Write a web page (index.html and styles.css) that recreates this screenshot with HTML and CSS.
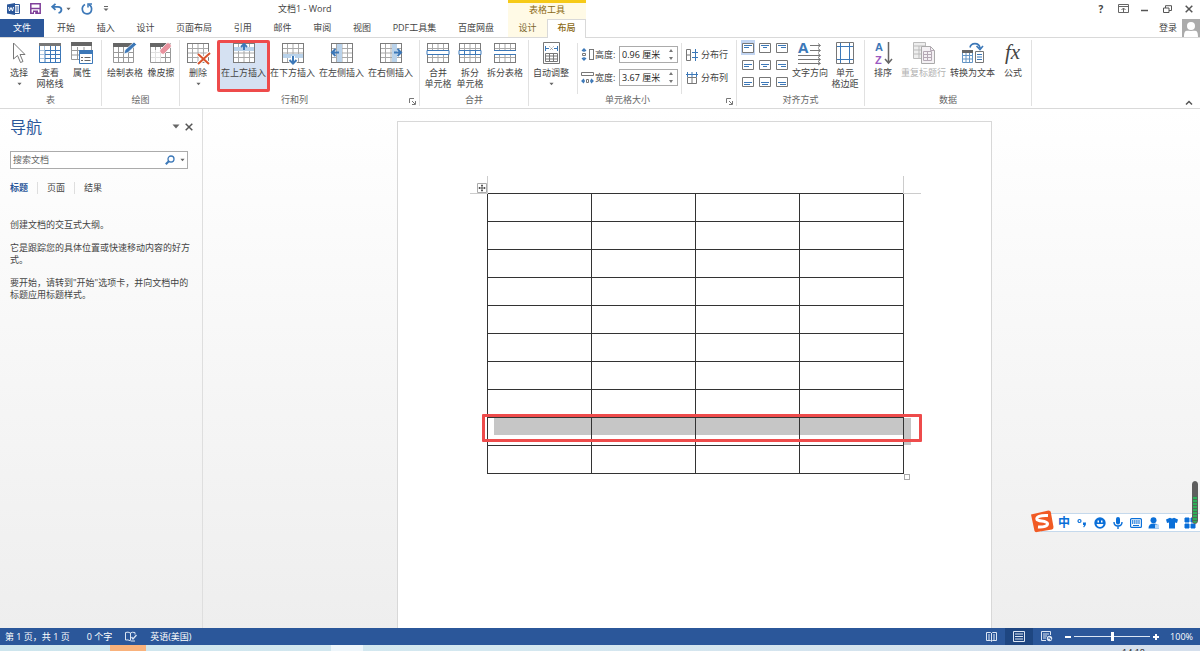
FILE: index.html
```html
<!DOCTYPE html>
<html lang="zh-CN">
<head>
<meta charset="utf-8">
<title>文档1 - Word</title>
<link rel="stylesheet" href="styles.css">
</head>
<body>
<svg class="defs" aria-hidden="true">
  <symbol id="grid" viewBox="0 0 22 20">
    <rect x=".5" y=".5" width="21" height="19" fill="#fff" stroke="#7c7c7c"/>
    <path d="M5.500 1v18M11 1v18M16.500 1v18M1 5.500h20M1 10h20M1 14.500h20" stroke="#a9a9a9" fill="none"/>
  </symbol>
  <symbol id="caret" viewBox="0 0 6 4"><path d="M.5 .5h5L3 3.500z" fill="#666"/></symbol>
  <symbol id="launch" viewBox="0 0 7 7"><path d="M.5 5V.5H5M3 3l3 3M6.500 3v3.500H3" stroke="#777" fill="none"/></symbol>
</svg>

<header class="top">
  <div class="titlebar">
    <div class="quick">
      <svg width="13" height="12" viewBox="0 0 13 12"><path d="M8 1.500h4.500v9H8M8.500 4h3M8.500 6h3M8.500 8h3" stroke="#2b579a" fill="none"/><path d="M0 1.500 8 0v12L0 10.500z" fill="#2b579a"/><path d="M1.500 4l1 4L4 4.500 5.500 8l1-4" stroke="#fff" fill="none"/></svg>
      <button type="button" aria-label="保存"><svg width="11" height="11" viewBox="0 0 11 11"><path d="M.8 .8h9.400v9.400H.8z" fill="#fff" stroke="#80409a" stroke-width="1.500"/><path d="M1 5.500h9" stroke="#80409a" stroke-width="1.500"/><path d="M3 7.500h5V11H3z" fill="#80409a"/><path d="M4 9h1.200v2H4z" fill="#fff"/></svg></button>
      <button type="button" class="undo" aria-label="撤消"><svg width="12" height="11" viewBox="0 0 12 11"><path d="M4.500 .8 1.200 3.800l3.300 3M1.500 3.800H7c4.500 0 4.500 5.200 .5 6.200" stroke="#3c78b8" stroke-width="1.800" fill="none"/></svg><svg width="5" height="4"><use href="#caret"/></svg></button>
      <button type="button" aria-label="恢复"><svg width="12" height="12" viewBox="0 0 12 12"><path d="M4 1.600C-.5 4 1 10.800 6 10.800c5.300 0 6-7 2-9" stroke="#3c78b8" stroke-width="1.700" fill="none"/><path d="M7 4.500V1h4" stroke="#3c78b8" stroke-width="1.500" fill="none"/></svg></button>
      <button type="button" aria-label="自定义"><svg width="6" height="6" viewBox="0 0 6 6"><path d="M1 .5h4" stroke="#666"/><path d="M.5 2.500h5L3 5z" fill="#666"/></svg></button>
    </div>
    <h1 class="doc-title">文档1 - Word</h1>
  </div>
  <div class="context-title">表格工具</div>
  <div class="window-buttons">
    <button type="button" class="help">?</button>
    <button type="button" aria-label="功能区显示选项"><svg width="11" height="9" viewBox="0 0 11 9"><path d="M.5 .5h10v8H.5zM1 2.500h9M5.500 8V4M3.500 6l2-2 2 2" stroke="#666" fill="none"/></svg></button>
    <button type="button" aria-label="最小化"><svg width="8" height="8"><path d="M0 5.500h7" stroke="#555" stroke-width="1.500"/></svg></button>
    <button type="button" aria-label="还原"><svg width="9" height="8" viewBox="0 0 9 8"><path d="M.5 3h5.500v4.500H.5zM2.500 3V.7h6V5.500H6" stroke="#555" fill="none"/></svg></button>
    <button type="button" aria-label="关闭"><svg width="8" height="8"><path d="M.7 .7l6.600 6.600M7.300 .7.7 7.300" stroke="#555" stroke-width="1.500"/></svg></button>
  </div>
  <nav class="tabs">
    <button type="button" class="file-tab">文件</button>
    <div class="tab-list">
      <a href="#">开始</a><a href="#">插入</a><a href="#">设计</a><a href="#">页面布局</a><a href="#">引用</a><a href="#">邮件</a><a href="#">审阅</a><a href="#">视图</a><a href="#">PDF工具集</a><a href="#">百度网盘</a>
    </div>
  </nav>
  <nav class="context-tabs"><a href="#">设计</a><a href="#" class="active">布局</a></nav>
  <div class="account">
    <a href="#">登录</a>
    <svg width="18" height="18" viewBox="0 0 18 18"><path d="M0 0h18v18H0z" fill="#ababab"/><circle cx="9" cy="7" r="4" fill="#fff"/><path d="M2 18c0-8 3-6 7-6s7-2 7 6z" fill="#fff"/></svg>
  </div>
</header>

<section class="ribbon" aria-label="布局">
  <div class="group">
    <div class="tools lead">
      <button type="button" class="tool w30"><svg width="22" height="22" viewBox="0 0 22 22"><path d="M5.500 1v16l4-3.500 3 7 2.500-1-3-7h5z" fill="#fff" stroke="#777"/></svg><span>选择</span><svg class="caret" width="5" height="4"><use href="#caret"/></svg></button>
      <button type="button" class="tool w32"><svg width="22" height="22" viewBox="0 0 22 22"><path d="M.5 1.500h21v19H.5z" fill="#fff" stroke="#3c78b8"/><path d="M0 1h22v3H0z" fill="#777"/><path d="M6 8v12M11.500 4v16M16.500 4v16M6 8.500h15M6 12.500h15M6 16.500h15" stroke="#3c78b8"/><path d="M5.500 4v4M1 8.500h4M1 12.500h4M1 16.500h4" stroke="#a9c4de"/></svg><span>查看<br>网格线</span></button>
      <button type="button" class="tool w32"><svg width="22" height="22" viewBox="0 0 22 22"><path d="M.5 1.500h20v16H.5zM1 8.500h8M1 13h7M6.500 5v12M13 5v4" fill="#fff" stroke="#999"/><path d="M0 0h21v4H0z" fill="#666"/><path d="M8.500 9.500h13v12h-13z" fill="#fff" stroke="#3c78b8"/><path d="M8 8h14v4H8z" fill="#3c78b8"/><path d="M10 15.500h2M10 18.500h2M13.500 15.500h6M13.500 18.500h6" stroke="#666"/></svg><span>属性</span></button>
    </div>
    <div class="group-name"><span>表</span></div>
  </div>
  <div class="group">
    <div class="tools inset">
      <button type="button" class="tool w42"><svg width="24" height="22" viewBox="0 0 24 22"><path d="M.5 1.500h20v19H.5zM1 10.500h19M1 15.500h19M5.500 5v15M10.500 5v15M15.500 5v15" fill="#fff" stroke="#999"/><path d="M0 1h19v4H0z" fill="#666"/><path d="M11 12l1-4L21 0l2.500 2.500L15 10.500z" fill="#3c78b8" stroke="#fff" stroke-width=".7"/></svg><span>绘制表格</span></button>
      <button type="button" class="tool w30"><svg width="22" height="22" viewBox="0 0 22 22"><path d="M.5 1.500h20v19H.5zM1 10.500h19M1 15.500h19M5.500 5v15M10.500 5v15M15.500 5v15" fill="#fff" stroke="#999"/><path d="M1 8h10v12H1z" fill="#fff" opacity=".7"/><path d="M0 1h17v4H0z" fill="#666"/><path d="M10 8l7-7c2-1 5 2 4 4l-7 7c-2 1-5-2-4-4z" fill="#e8929e" stroke="#fff" stroke-width=".7"/></svg><span>橡皮擦</span></button>
    </div>
    <div class="group-name"><span>绘图</span></div>
  </div>
  <div class="group">
    <div class="tools rows">
      <button type="button" class="tool w36"><svg width="24" height="22" viewBox="0 0 24 22"><use href="#grid" x="1" y="1" width="22" height="20"/><path d="M12 12l11 10M24 11 12 22" stroke="#fff" stroke-width="4"/><path d="M12 12l11 10M24 11 12 22" stroke="#d9532c" stroke-width="2"/></svg><span>删除</span><svg class="caret" width="5" height="4"><use href="#caret"/></svg></button>
      <button type="button" class="tool w49 chosen"><svg width="22" height="22" viewBox="0 0 22 22"><use href="#grid" y="1" width="22" height="20"/><path d="M1 5h20v4H1z" fill="#b9d2ea"/><path d="M11 8V2M8 5l3-3 3 3" stroke="#3c78b8" stroke-width="2" fill="none"/></svg><span>在上方插入</span></button>
      <button type="button" class="tool w49"><svg width="22" height="24" viewBox="0 0 22 24"><use href="#grid" y="2" width="22" height="20"/><path d="M1 13h20v4H1z" fill="#b9d2ea"/><path d="M11 15v7M7.500 19l3.500 3.500 3.500-3.500" stroke="#fff" stroke-width="4" fill="none"/><path d="M11 15v7M7.500 19l3.500 3.500 3.500-3.500" stroke="#3c78b8" stroke-width="2" fill="none"/></svg><span>在下方插入</span></button>
      <button type="button" class="tool w49"><svg width="22" height="22" viewBox="0 0 22 22"><use href="#grid" y="1" width="22" height="20"/><path d="M6 2h5v18H6z" fill="#b9d2ea"/><path d="M8 10.500H1.500M4.500 7l-3.500 3.500L4.500 14" stroke="#3c78b8" stroke-width="2" fill="none"/></svg><span>在左侧插入</span></button>
      <button type="button" class="tool w49"><svg width="22" height="22" viewBox="0 0 22 22"><use href="#grid" y="1" width="22" height="20"/><path d="M12 2h5v18h-5z" fill="#b9d2ea"/><path d="M14 10.500h6.500M17.500 7l3.500 3.500-3.500 3.500" stroke="#3c78b8" stroke-width="2" fill="none"/></svg><span>在右侧插入</span></button>
    </div>
    <div class="group-name"><span>行和列</span><button type="button" aria-label="行和列选项"><svg width="7" height="7"><use href="#launch"/></svg></button></div>
  </div>
  <div class="group">
    <div class="tools merge">
      <button type="button" class="tool w32"><svg width="22" height="22" viewBox="0 0 22 22"><use href="#grid" y="1" width="22" height="20"/><path d="M0 8.500h22v4H0z" fill="#fff" stroke="#3c78b8"/></svg><span>合并<br>单元格</span></button>
      <button type="button" class="tool w32"><svg width="22" height="22" viewBox="0 0 22 22"><use href="#grid" y="1" width="22" height="20"/><path d="M0 8.500h22v4H0zM5.500 9v3M11 9v3M16.500 9v3" fill="#fff" stroke="#3c78b8"/></svg><span>拆分<br>单元格</span></button>
      <button type="button" class="tool w38"><svg width="22" height="22" viewBox="0 0 22 22"><use href="#grid" y="1" width="22" height="20"/><path d="M0 8h22v5H0z" fill="#fff"/><path d="M0 8.500h22M0 12.500h22" stroke="#3c78b8"/></svg><span>拆分表格</span></button>
    </div>
    <div class="group-name"><span>合并</span></div>
  </div>
  <div class="group">
    <div class="tools">
      <button type="button" class="tool w44"><svg width="17" height="22" viewBox="0 0 17 22"><path d="M.5 .5h16v21H.5z" fill="#fff" stroke="#777"/><path d="M2.500 4v5M14.500 4v5M3 6.500h3M11 6.500h3" stroke="#3c78b8"/><path d="M6.500 4.500l4 4M10.500 4.500l-4 4" stroke="#888" stroke-dasharray="1 1"/><path d="M2.500 11.500h12v8h-12zM2.500 14h12M2.500 17h12M6.500 12v7M10.500 12v7" fill="none" stroke="#777"/></svg><span>自动调整</span><svg class="caret" width="5" height="4"><use href="#caret"/></svg></button>
      <div class="sizes">
        <div class="size-row"><svg width="13" height="13" viewBox="0 0 13 13"><path d="M3 1v3M3 9v3M1 3l2-2 2 2M1 10l2 2 2-2" stroke="#3c78b8" stroke-width="1.300" fill="none"/><path d="M1.500 5.500h3v2h-3zM8.500 1v11M12.500 1v11M8.500 1.500h4M8.500 11.500h4" stroke="#777" fill="none"/></svg><label for="row-height">高度:</label><span class="spin"><input id="row-height" type="text" value="0.96 厘米"><span class="steps"><button type="button" aria-label="增加高度"></button><button type="button" class="down" aria-label="减少高度"></button></span></span></div>
        <div class="size-row"><svg width="13" height="13" viewBox="0 0 13 13"><path d="M4 10H1M9 10h3M3 8l-2 2 2 2M10 8l2 2-2 2" stroke="#3c78b8" stroke-width="1.300" fill="none"/><path d="M.5 1.500h12v3H.5zM5.500 8.500h2v3h-2z" stroke="#777" fill="none"/></svg><label for="col-width">宽度:</label><span class="spin"><input id="col-width" type="text" value="3.67 厘米"><span class="steps"><button type="button" aria-label="增加宽度"></button><button type="button" class="down" aria-label="减少宽度"></button></span></span></div>
      </div>
      <div class="spread">
        <button type="button"><svg width="12" height="12" viewBox="0 0 12 12"><path d="M.5 .5v11h4V.5zM1 6h3" stroke="#777" fill="none"/><path d="M6 3.500h6M6 8.500h6M9.500 0v12" stroke="#3c78b8"/></svg><span>分布行</span></button>
        <button type="button"><svg width="12" height="12" viewBox="0 0 12 12"><path d="M1.500 5.500h9v6h-9zM6 6v5" stroke="#777" fill="none"/><path d="M0 2.500h12M1.500 0v5M6 0v5M10.500 0v5" stroke="#3c78b8"/></svg><span>分布列</span></button>
      </div>
    </div>
    <div class="group-name"><span>单元格大小</span><button type="button" aria-label="单元格大小选项"><svg width="7" height="7"><use href="#launch"/></svg></button></div>
  </div>
  <div class="group">
    <div class="tools inset">
      <div class="align-grid">
        <button type="button" class="on" aria-label="靠上两端对齐"><svg width="12" height="10" viewBox="0 0 12 10"><path d="M.5 .5h11v9H.5z"/><path class="b" d="M2 2.500h8M2 4.500h5"/></svg></button>
        <button type="button" aria-label="靠上居中对齐"><svg width="12" height="10" viewBox="0 0 12 10"><path d="M.5 .5h11v9H.5z"/><path class="b" d="M2 2.500h8M4 4.500h4"/></svg></button>
        <button type="button" aria-label="靠上右对齐"><svg width="12" height="10" viewBox="0 0 12 10"><path d="M.5 .5h11v9H.5z"/><path class="b" d="M2 2.500h8M5 4.500h5"/></svg></button>
        <button type="button" aria-label="中部两端对齐"><svg width="12" height="10" viewBox="0 0 12 10"><path d="M.5 .5h11v9H.5z"/><path class="b" d="M2 4.500h8M2 6.500h5"/></svg></button>
        <button type="button" aria-label="水平居中"><svg width="12" height="10" viewBox="0 0 12 10"><path d="M.5 .5h11v9H.5z"/><path class="b" d="M2 4.500h8M4 6.500h4"/></svg></button>
        <button type="button" aria-label="中部右对齐"><svg width="12" height="10" viewBox="0 0 12 10"><path d="M.5 .5h11v9H.5z"/><path class="b" d="M2 4.500h8M5 6.500h5"/></svg></button>
        <button type="button" aria-label="靠下两端对齐"><svg width="12" height="10" viewBox="0 0 12 10"><path d="M.5 .5h11v9H.5z"/><path class="b" d="M2 5.500h8M2 7.500h6"/></svg></button>
        <button type="button" aria-label="靠下居中对齐"><svg width="12" height="10" viewBox="0 0 12 10"><path d="M.5 .5h11v9H.5z"/><path class="b" d="M2 5.500h8M3 7.500h6"/></svg></button>
        <button type="button" aria-label="靠下右对齐"><svg width="12" height="10" viewBox="0 0 12 10"><path d="M.5 .5h11v9H.5z"/><path class="b" d="M2 5.500h8M4 7.500h6"/></svg></button>
      </div>
      <button type="button" class="tool w38"><svg width="24" height="24" viewBox="0 0 24 24"><text x="0" y="12" class="letter-a">A</text><path d="M12 4.500h10M12 9.500h10M0 14.500h22M0 18.500h22M0 22.500h22M20 2.500l2.500 2-2.500 2M20 7.500l2.500 2-2.500 2M20 12.500l2.500 2-2.500 2M20 16.500l2.500 2-2.500 2M20 20.500l2.500 2-2.500 1.500" stroke="#777" fill="none"/></svg><span>文字方向</span></button>
      <button type="button" class="tool w32"><svg width="18" height="22" viewBox="0 0 18 22"><path d="M.5 .5h17v21H.5z" fill="#fff" stroke="#777"/><path d="M4.500 1v20M13.500 1v20M1 4.500h16M1 17.500h16" stroke="#3c78b8"/></svg><span>单元<br>格边距</span></button>
    </div>
    <div class="group-name"><span>对齐方式</span></div>
  </div>
  <div class="group">
    <div class="tools data">
      <button type="button" class="tool w32"><svg width="19" height="24" viewBox="0 0 19 24"><text x="1" y="10" class="sort-a">A</text><text x="1" y="23" class="sort-z">Z</text><path d="M14.500 1v20M11 18l3.500 4 3.500-4" stroke="#666" stroke-width="1.500" fill="none"/></svg><span>排序</span></button>
      <button type="button" class="tool w49 off" disabled><svg width="22" height="22" viewBox="0 0 22 22"><path d="M.5 .5h12v16H.5zM1 4h11M1 8h11M1 12h11M6 4v12" fill="#eee" stroke="#bbb"/><path d="M8.500 4.500h9l4 4v13h-13z" fill="#f4f1f4" stroke="#aaa"/><path d="M10.500 9.500h8v9h-8zM10.500 12.500h8M10.500 15.500h8M14.500 9v9M17.500 4.500v4h4" fill="none" stroke="#b5a9b5"/></svg><span>重复标题行</span></button>
      <button type="button" class="tool w49"><svg width="22" height="22" viewBox="0 0 22 22"><path d="M.5 9.500h10v11H.5zM1 13.500h9M1 17h9M4 11v9M7.500 11v9" fill="#fff" stroke="#6595c4"/><path d="M0 8h11v3H0z" fill="#666"/><path d="M13.500 9.500h8v11h-8z" fill="#fff" stroke="#777"/><path d="M15 12.500h5M15 15h5M15 17.500h5" stroke="#3c78b8"/><path d="M8 5.500C9 .5 17 0 18 6M14.500 4l3.500 3.500L21 4" stroke="#3c78b8" stroke-width="1.600" fill="none"/></svg><span>转换为文本</span></button>
      <button type="button" class="tool w32"><svg width="20" height="24" viewBox="0 0 20 24"><text x="2" y="18" class="fx">fx</text></svg><span>公式</span></button>
    </div>
    <div class="group-name"><span>数据</span></div>
  </div>
  <button type="button" class="collapse" aria-label="折叠功能区"><svg width="8" height="5"><path d="M1 4.500l3-3 3 3" stroke="#555" stroke-width="1.500" fill="none"/></svg></button>
</section>

<main class="workspace">
  <aside class="pane">
    <div class="pane-head">
      <h2>导航</h2>
      <button type="button" aria-label="窗格选项"><svg width="8" height="5" viewBox="0 0 8 5"><path d="M.5 .5h7L4 4.500z" fill="#666"/></svg></button>
      <button type="button" aria-label="关闭窗格"><svg width="8" height="8"><path d="M.7 .7l6.600 6.600M7.300 .7.7 7.300" stroke="#555" stroke-width="1.500"/></svg></button>
    </div>
    <div class="search">
      <input type="text" placeholder="搜索文档" aria-label="搜索文档">
      <button type="button" aria-label="搜索"><svg width="10" height="10" viewBox="0 0 10 10"><circle cx="6" cy="4" r="3" stroke="#3c78b8" stroke-width="1.300" fill="none"/><path d="M4 6 .8 9.200" stroke="#3c78b8" stroke-width="2"/></svg></button>
      <button type="button" aria-label="搜索选项"><svg width="5" height="4"><use href="#caret"/></svg></button>
    </div>
    <div class="pane-tabs"><a href="#" class="current">标题</a><a href="#">页面</a><a href="#">结果</a></div>
    <p>创建文档的交互式大纲。</p>
    <p>它是跟踪您的具体位置或快速移动内容的好方式。</p>
    <p>要开始，请转到"开始"选项卡，并向文档中的标题应用标题样式。</p>
  </aside>
  <div class="canvas">
    <article class="page">
      <div class="table-wrap">
        <table>
          <tbody>
            <tr><td></td><td></td><td></td><td></td></tr>
            <tr><td></td><td></td><td></td><td></td></tr>
            <tr><td></td><td></td><td></td><td></td></tr>
            <tr><td></td><td></td><td></td><td></td></tr>
            <tr><td></td><td></td><td></td><td></td></tr>
            <tr><td></td><td></td><td></td><td></td></tr>
            <tr><td></td><td></td><td></td><td></td></tr>
            <tr><td></td><td></td><td></td><td></td></tr>
            <tr class="selected"><td></td><td></td><td></td><td></td></tr>
            <tr><td></td><td></td><td></td><td></td></tr>
          </tbody>
        </table>
        <i class="corner left"></i><i class="corner right"></i>
        <svg class="move" width="10" height="10" viewBox="0 0 10 10"><path d="M.5 .5h9v9h-9z" fill="#fff" stroke="#aaa"/><path d="M5 1.500v7M1.500 5h7M4 2.500h2M4 7.500h2M2.500 4v2M7.500 4v2" stroke="#555"/></svg>
        <i class="row-end"></i><i class="row-mark"></i><i class="resize"></i>
      </div>
    </article>
  </div>
  <div class="ime">
    <svg class="ime-logo" width="24" height="23" viewBox="0 0 24 23"><path d="M1 4.500 18.500 .5q2 0 2.300 1.500L23.500 17q0 2-1.500 2.500L7 22q-2 .5-2.500-1z" fill="#f15a24"/><path d="M18 5.500C10 5 6 7 7 9.500c1 2 10 1 10.500 4 .3 2.500-4 4-9.500 3.500" stroke="#fff" stroke-width="3" fill="none"/></svg>
    <span class="ime-mode">中</span>
    <svg width="12" height="12" viewBox="0 0 12 12"><circle cx="3.500" cy="4" r="1.500" stroke="#0a6fd8" stroke-width="1.200" fill="none"/><path d="M7 5.500h3q.5 3-2 5l-.8-.7 1-1.800H7z" fill="#0a6fd8"/></svg>
    <svg width="12" height="12" viewBox="0 0 12 12"><circle cx="6" cy="6" r="5.700" fill="#0a6fd8"/><path d="M3.500 3.500h1.500v2H3.500zM7 3.500h1.500v2H7zM2.500 7h7q-.8 3-3.500 3T2.500 7z" fill="#fff"/></svg>
    <svg width="12" height="12" viewBox="0 0 12 12"><rect x="4" y="0" width="4" height="7.500" rx="2" fill="#0a6fd8"/><path d="M2 5q0 4 4 4t4-4M6 9v3" stroke="#0a6fd8" stroke-width="1.400" fill="none"/></svg>
    <svg width="12" height="12" viewBox="0 0 12 12"><rect x=".6" y="1.600" width="10.800" height="8.800" rx="1" fill="#fff" stroke="#0a6fd8" stroke-width="1.200"/><path d="M2 4h8M2 6h8" stroke="#0a6fd8" stroke-width="1.300" stroke-dasharray="1.400 .7"/><path d="M3 8.500h6" stroke="#0a6fd8"/></svg>
    <svg width="12" height="12" viewBox="0 0 12 12"><circle cx="5.500" cy="3.200" r="3" fill="#0a6fd8"/><path d="M.5 11.500q0-5 5-5 5.500 0 5.500 5z" fill="#0a6fd8"/><path d="M7 7.500h4v4H7z" fill="#b9d8f6"/></svg>
    <svg width="12" height="12" viewBox="0 0 12 12"><path d="M0 2.500 4 .7q2 1.500 4 0l4 1.800-1 3.500-2-.5v6H3v-6L1 6z" fill="#0a6fd8"/></svg>
    <svg width="12" height="12" viewBox="0 0 12 12"><path d="M1 1h4v4H1zM7 1h4v4H7zM1 7h4v4H1zM7 7h4v4H7z" fill="#0a6fd8" stroke="#0a6fd8" stroke-linejoin="round"/></svg>
    <i class="meter"></i>
  </div>
</main>

<footer class="status">
  <span class="pages">第 1 页，共 1 页</span>
  <span>0 个字</span>
  <svg width="12" height="11" viewBox="0 0 12 11"><path d="M5.500 2v7.500M5.500 2Q3 .5.500 1.500V9q2.500-.5 5 .8M5.500 2Q7 .8 10 1.500v2M6 10h4" stroke="#dce6f4" fill="none"/><path d="M6.500 6l1.500 2L11.500 4" stroke="#dce6f4" stroke-width="1.300" fill="none"/></svg>
  <span>英语(美国)</span>
  <div class="views">
    <button type="button" aria-label="阅读视图"><svg width="11" height="11" viewBox="0 0 11 11"><path d="M.5 1.500h4l1 1 1-1h4v8h-4l-1 1-1-1h-4zM5.500 2v8M2 4h2M2 6h2M2 8h2M7 4h2M7 6h2M7 8h2" stroke="#dce6f4" fill="none"/></svg></button>
    <button type="button" class="on" aria-label="页面视图"><svg width="12" height="11" viewBox="0 0 12 11"><path d="M.5 .5h11v10H.5zM2 3h8M2 5.500h8M2 8h8" stroke="#dce6f4" fill="none"/></svg></button>
    <button type="button" aria-label="Web 版式视图"><svg width="12" height="11" viewBox="0 0 12 11"><path d="M5 9.500H.5v-9h9V4M2 3h6M2 5h4M2 7h3" stroke="#dce6f4" fill="none"/><circle cx="8.500" cy="7.500" r="2.700" fill="#dce6f4"/><path d="M7 7h2l1 2" stroke="#2b579a" fill="none"/></svg></button>
  </div>
  <div class="zoom">
    <button type="button" class="minus" aria-label="缩小"></button>
    <input type="range" min="0" max="100" value="50" aria-label="缩放级别">
    <button type="button" class="plus" aria-label="放大"></button>
    <span>100%</span>
  </div>
</footer>
<div class="taskbar"><i class="task orange"></i><i class="task light"></i><time>14:18</time></div>
</body>
</html>
```
FILE: styles.css
```css
* { box-sizing: border-box; }
html, body { height: 100%; }
body {
  margin: 0;
  display: flex;
  flex-direction: column;
  overflow: hidden;
  background: #fff;
  color: #444;
  font: 9px/12px "Open Sans", "Noto Sans CJK SC", sans-serif;
}
button, input { margin: 0; padding: 0; border: 0; background: none; color: inherit; font: inherit; }
a { color: inherit; text-decoration: none; }
svg { display: block; flex: none; overflow: visible; }
h1, h2, p { margin: 0; font-weight: 400; }
.defs { position: absolute; width: 0; height: 0; }

/* Title bar and tabs */
.top { display: grid; grid-template-columns: 508px 78px 1fr; grid-template-rows: 19px 19px; flex: none; }
.titlebar { display: flex; align-items: center; padding: 0 0 2px 7px; }
.quick { display: flex; align-items: center; gap: 10px; width: 271px; }
.undo { display: flex; align-items: center; gap: 3px; }
.doc-title { font-size: 9px; line-height: 12px; }
.context-title { border-top: 3px solid #f6ca18; background: #fffae6; color: #8a6914; text-align: center; line-height: 13px; }
.window-buttons { display: flex; justify-content: flex-end; align-items: center; padding-bottom: 2px; }
.window-buttons button { display: flex; justify-content: center; width: 22px; }
.help { font-weight: 700; font-size: 10px; }
.tabs { display: flex; border-bottom: 1px solid #d9d9d9; }
.file-tab { width: 44px; background: #2b579a; color: #fff; }
.tab-list { flex: 1; display: flex; justify-content: space-between; align-items: center; padding: 0 14px 0 13px; }
.context-tabs { display: grid; grid-template-columns: 1fr 1fr; background: #fffae6; line-height: 17px; text-align: center; }
.context-tabs a { border-bottom: 1px solid #d9d9d9; color: #7b662c; }
.context-tabs .active { background: #fff; border: 1px solid #d9d9d9; border-bottom: 0; color: #8a6914; font-weight: 500; line-height: 16px; }
.account { display: flex; justify-content: flex-end; align-items: center; gap: 5px; border-bottom: 1px solid #d9d9d9; }

/* Ribbon */
.ribbon { display: flex; flex: none; padding: 2px 0; border-bottom: 1px solid #d9d9d9; background: #fff; }
.group { display: flex; flex-direction: column; border-right: 1px solid #e1e1e1; }
.tools { display: flex; height: 54px; padding: 0 2px 0 0; }
.tools.lead { padding: 0 3px 0 4px; }
.tools.inset { padding: 0 3px 0 2px; }
.tools.rows { padding-right: 4px; }
.tools.merge { padding: 0 4px 0 2px; }
.tools.data { padding-left: 2px; }
.group-name { display: flex; align-items: center; height: 12px; color: #666; }
.group-name span { flex: 1; text-align: center; }
.group-name button { width: 10px; padding-top: 3px; }
.tool { position: relative; display: flex; flex-direction: column; align-items: center; height: 51px; margin-top: 1px; line-height: 11px; white-space: nowrap; }
.tool > svg:first-child { height: 24px; margin-bottom: 2px; }
.tool .caret { margin-top: 4px; }
.w30 { width: 30px; }
.w32 { width: 32px; }
.w36 { width: 36px; }
.w38 { width: 38px; }
.w42 { width: 42px; }
.w44 { width: 44px; }
.w49 { width: 49px; }
.chosen { margin-left: 3px; background: #d5e1f2; }
.chosen::after { content: ""; position: absolute; inset: -1px -2px 0; border: 3px solid #ee4b4b; border-radius: 2px; }
.off { color: #b1b1b1; }
.sizes { display: flex; flex-direction: column; gap: 6px; margin: 3px 0 0 4px; padding: 3px; border-left: 1px solid #e1e1e1; }
.size-row { display: flex; align-items: center; height: 17px; }
.size-row label { width: 25px; padding-left: 1px; }
.spin { display: flex; width: 59px; height: 17px; border: 1px solid #ababab; color: #222; }
.spin input { flex: 1; min-width: 0; padding-left: 2px; outline: 0; }
.steps { display: flex; flex-direction: column; justify-content: center; align-items: center; gap: 5px; width: 12px; }
.steps button { border: solid transparent; border-width: 0 2px 3px; border-bottom-color: #777; }
.steps .down { border-width: 3px 2px 0; border-top-color: #777; }
.spread { display: flex; flex-direction: column; gap: 6px; margin-top: 3px; padding: 3px 6px 3px 4px; border-left: 1px solid #e1e1e1; }
.spread button { display: flex; align-items: center; gap: 3px; height: 17px; }
.align-grid { display: grid; grid-template-columns: repeat(3, 14px); grid-auto-rows: 15px; gap: 2px 3px; margin-left: 2px; }
.align-grid button { display: flex; align-items: center; justify-content: center; }
.align-grid .on { background: #c2d5f2; }
.align-grid path { fill: #fff; stroke: #777; }
.align-grid .b { fill: none; stroke: #3c78b8; }
.align-grid + .tool { margin-left: 2px; }
.letter-a { font: 700 15px "Open Sans", sans-serif; fill: #3c78b8; }
.sort-a { font: 700 11px "Liberation Sans", sans-serif; fill: #3c78b8; }
.sort-z { font: 700 11px "Liberation Sans", sans-serif; fill: #9b59c0; }
.fx { font: italic 21px "Liberation Serif", serif; fill: #444; }
.collapse { margin: auto 7px 0 auto; padding-bottom: 1px; }

/* Navigation pane */
.workspace { position: relative; flex: 1; min-height: 0; display: flex; background: linear-gradient(#fff, #eee); }
.pane { width: 203px; flex: none; padding: 10px 12px 0 10px; border-right: 1px solid #dedede; }
.pane-head { display: flex; align-items: center; height: 18px; gap: 5px; padding-bottom: 3px; }
.pane-head h2 { flex: 1; color: #2b579a; font-size: 16px; line-height: 18px; }
.pane-head button:last-child { margin-right: -3px; }
.search { display: flex; align-items: center; gap: 5px; width: 178px; height: 18px; margin-top: 14px; padding: 0 2px; border: 1px solid #ababab; background: #fff; }
.search input { flex: 1; min-width: 0; outline: 0; }
.search input::placeholder { color: #666; opacity: 1; }
.pane-tabs { display: flex; margin: 13px 0 25px; }
.pane-tabs a { padding-right: 9px; line-height: 12px; }
.pane-tabs a + a { padding-left: 9px; border-left: 1px solid #dedede; }
.pane-tabs .current { color: #2b579a; font-weight: 700; }
.pane p { margin-bottom: 11px; }

/* Document */
.canvas { flex: 1; min-width: 0; display: flex; justify-content: center; padding: 12px 15px 0 0; }
.page { width: 595px; padding: 71px 0 0 89px; border: 1px solid #d8d8d8; border-bottom: 0; background: #fff; }
.table-wrap { position: relative; width: 417px; }
table { width: 100%; border-collapse: collapse; table-layout: fixed; }
td { height: 28px; padding: 0; border: 1px solid #333; }
.selected td { background: linear-gradient(#c6c6c6, #c6c6c6) 0 0 / 100% 17px no-repeat; }
.selected td:first-child { background-position: 6px 0; }
.corner { position: absolute; top: -17px; width: 18px; height: 18px; border-bottom: 1px solid #ccc; }
.corner.left { right: 100%; margin-right: -1px; border-right: 1px solid #ccc; }
.corner.right { left: 100%; margin-left: -1px; border-left: 1px solid #ccc; }
.move { position: absolute; top: -10px; left: -10px; }
.row-end { position: absolute; left: 100%; top: 225px; width: 7px; height: 27px; background: #c6c6c6; }
.row-mark { position: absolute; left: -5px; right: -18px; top: 221px; height: 28px; border: 3px solid #ee4b4b; border-radius: 1px; }
.resize { position: absolute; left: 100%; top: 100%; width: 6px; height: 6px; border: 1px solid #aaa; background: #fff; }

/* Input method bar */
.ime { position: absolute; right: 0; bottom: 96px; display: flex; align-items: center; gap: 6px; height: 19px; padding: 0 4px 0 16px; border: 1px solid #c5d9ec; border-right: 0; background: #fff; }
.ime-logo { position: absolute; left: -12px; top: -4px; }
.ime-mode { width: 12px; color: #0a6fd8; font-size: 12px; font-weight: 700; }
.meter { position: absolute; right: 2px; bottom: 7px; width: 6px; height: 43px; border: 1px solid #5e5e5e; border-radius: 3px; background: linear-gradient(#5e5e5e 14px, transparent 14px), repeating-linear-gradient(#2eae58 0 2px, #4b6b54 2px 3px); }

/* Status bar */
.status { display: flex; align-items: center; flex: none; gap: 13px; height: 17px; padding: 0 7px 0 5px; background: #2b579a; color: #fff; }
.pages { margin-right: 4px; }
.views { display: flex; margin-left: auto; height: 17px; }
.views button { display: flex; align-items: center; justify-content: center; width: 28px; }
.views .on { background: #1e4681; }
.zoom { display: flex; align-items: center; gap: 3px; margin-left: -9px; }
.zoom input { width: 76px; height: 9px; appearance: none; background: linear-gradient(#dce6f4, #dce6f4) center / 100% 1px no-repeat; }
.zoom input::-webkit-slider-thumb { appearance: none; width: 3px; height: 9px; background: #fff; }
.zoom span { margin-left: 8px; }
.minus, .plus { width: 6px; height: 6px; background: linear-gradient(#fff, #fff) center / 6px 2px no-repeat; }
.plus { background: linear-gradient(#fff, #fff) center / 6px 2px no-repeat, linear-gradient(#fff, #fff) center / 2px 6px no-repeat; }

/* Desktop taskbar edge */
.taskbar { display: flex; flex: none; height: 6px; padding: 0 55px 0 110px; overflow: hidden; background: linear-gradient(90deg, #cde5ed, #d4e8f0 40%, #d5dfec); }
.task { width: 36px; }
.orange { margin-right: 185px; background: #f9b27c; }
.light { width: 32px; background: #eef6fb; }
.taskbar time { margin-left: auto; padding-top: 2px; color: #222; line-height: 12px; }
```
